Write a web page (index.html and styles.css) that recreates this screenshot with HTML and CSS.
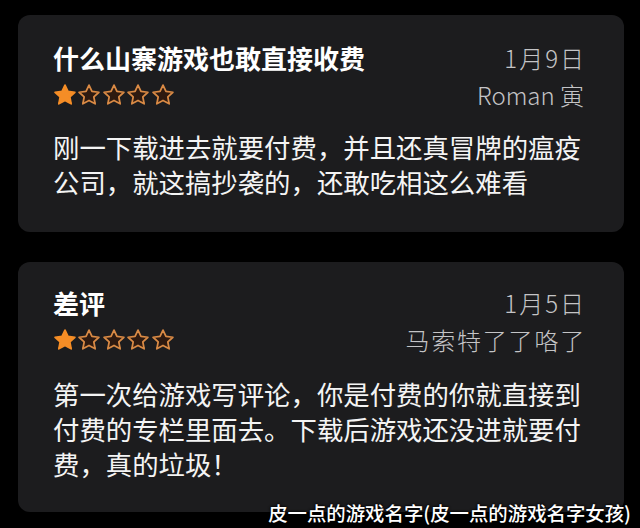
FILE: index.html
```html
<!DOCTYPE html>
<html lang="zh-CN">

<head>
  <meta charset="UTF-8">
  <meta name="viewport" content="width=device-width, initial-scale=1.0">
  <title>评论</title>
  <link rel="stylesheet" href="styles.css">
</head>

<body>
  <svg width="0" height="0" class="defs">
    <defs>
      <path id="star" d="M10 1l2.7 5.7 6.3.8-4.6 4.3 1.2 6.2L10 15l-5.6 3 1.2-6.2L1 7.5l6.3-.8z" />
    </defs>
  </svg>

  <div class="list">
    <div class="card">
      <div class="head">
        <div class="title">什么山寨游戏也敢直接收费</div>
        <div class="date">1月9日</div>
        <div class="stars">
          <svg class="star on" viewBox="0 0 20 20"><use href="#star" /></svg>
          <svg class="star" viewBox="0 0 20 20"><use href="#star" /></svg>
          <svg class="star" viewBox="0 0 20 20"><use href="#star" /></svg>
          <svg class="star" viewBox="0 0 20 20"><use href="#star" /></svg>
          <svg class="star" viewBox="0 0 20 20"><use href="#star" /></svg>
        </div>
        <div class="author">Roman 寅</div>
      </div>
      <p class="body">刚一下载进去就要付费，并且还真冒牌的瘟疫公司，就这搞抄袭的，还敢吃相这么难看</p>
    </div>

    <div class="card second">
      <div class="head">
        <div class="title">差评</div>
        <div class="date">1月5日</div>
        <div class="stars">
          <svg class="star on" viewBox="0 0 20 20"><use href="#star" /></svg>
          <svg class="star" viewBox="0 0 20 20"><use href="#star" /></svg>
          <svg class="star" viewBox="0 0 20 20"><use href="#star" /></svg>
          <svg class="star" viewBox="0 0 20 20"><use href="#star" /></svg>
          <svg class="star" viewBox="0 0 20 20"><use href="#star" /></svg>
        </div>
        <div class="author wide">马索特了了咯了</div>
      </div>
      <p class="body">第一次给游戏写评论，你是付费的你就直接到付费的专栏里面去。下载后游戏还没进就要付费，真的垃圾！</p>
    </div>
  </div>

  <div class="mark">皮一点的游戏名字(皮一点的游戏名字女孩)</div>
</body>

</html>
```

FILE: styles.css
```css
body {
  margin: 0;
  padding: 0;
  width: 640px;
  height: 528px;
  background: #000;
  font-family: "Noto Sans CJK SC", "Noto Sans", sans-serif;
  color: #fff;
  position: relative;
  overflow: hidden;
}

.defs {
  position: absolute;
}

.list {
  display: flex;
  flex-direction: column;
  gap: 30px;
  padding: 15px 16px 0 18px;
}

.card {
  background: #1c1c1e;
  border-radius: 12px;
  padding: 24px 40px 33px 35px;
}

.second {
  padding-top: 22px;
  padding-bottom: 31px;
}

.head {
  display: grid;
  grid-template-columns: 1fr auto;
  grid-auto-rows: 37px;
  align-items: center;
}

.title {
  font-size: 26px;
  font-weight: bold;
  line-height: 37px;
}

.date,
.author {
  font-size: 24px;
  line-height: 37px;
  color: #c4c4c6;
  text-align: right;
  font-weight: 300;
}

.date {
  letter-spacing: 2px;
  margin-right: -2px;
}

.author.wide {
  letter-spacing: 1.8px;
  margin-right: -2px;
}

.stars {
  display: flex;
  gap: 2.5px;
  padding-left: 0.5px;
}

.star {
  width: 22px;
  height: 22px;
  fill: #2e1a10;
  stroke: #d98a45;
  stroke-width: 1.6;
  stroke-linejoin: round;
}

.star.on {
  fill: #f58d26;
  stroke: #f58d26;
}

.body {
  margin: 16px 0 0;
  font-size: 26.4px;
  line-height: 35px;
  color: #f4f4f4;
}

.second .body {
  margin-top: 18px;
}

.mark {
  position: absolute;
  right: 9px;
  top: 499px;
  font-size: 19.4px;
  line-height: 27px;
  font-weight: 500;
  color: #fff;
  text-shadow: 0 0 2px #000, 0 0 3px #000;
}
```
